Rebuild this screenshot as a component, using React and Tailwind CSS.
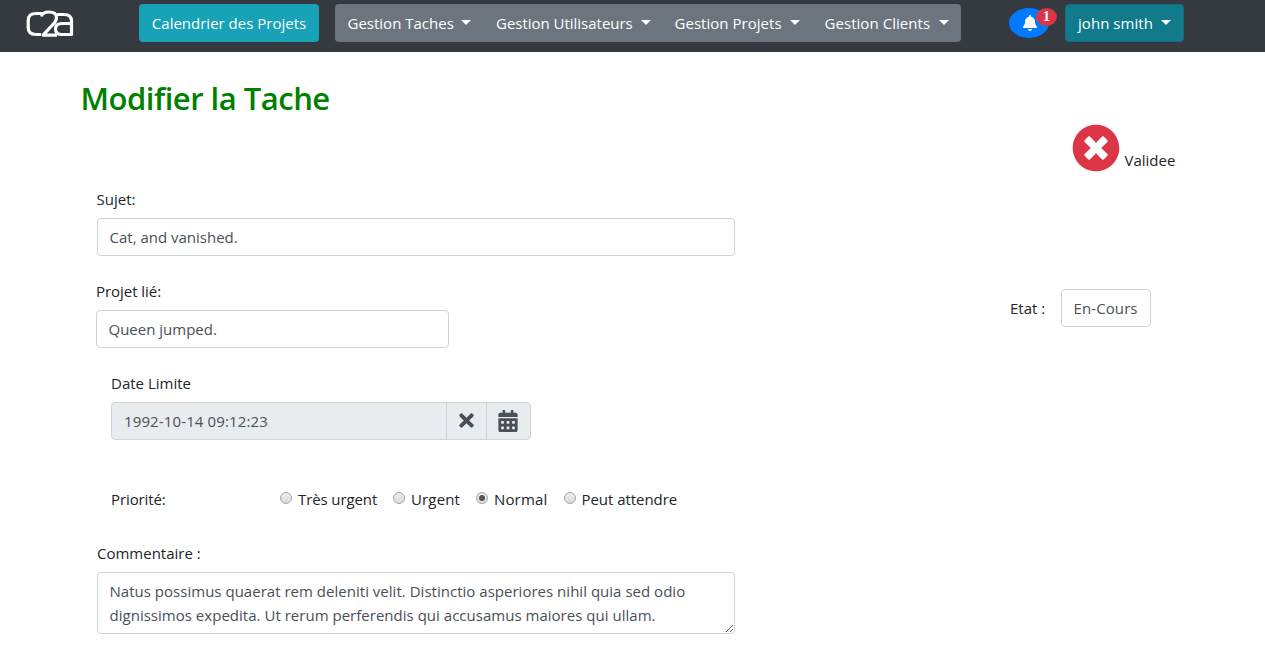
import { FaBell, FaTimesCircle, FaTimes, FaCalendarAlt } from "react-icons/fa";

const Caret = () => (
  <span className="ml-[8px] mt-[-2px] inline-block border-x-[5px] border-t-[5px] border-x-transparent border-t-white" />
);

const menus = [
  { label: "Gestion Taches", box: "w-[148.5px] rounded-l", text: "w-[105px]" },
  { label: "Gestion Utilisateurs", box: "w-[178.5px]", text: "w-[137px] tracking-[-0.02px]" },
  { label: "Gestion Projets", box: "w-[150px]", text: "w-[107.5px] tracking-[0.03px]" },
  { label: "Gestion Clients", box: "w-[149px] rounded-r", text: "w-[106px] tracking-[0.05px]" },
];

const priorities = [
  { label: "Très urgent", box: "w-[113px] tracking-[-0.1px]" },
  { label: "Urgent", box: "w-[83px] tracking-[0.15px]" },
  { label: "Normal", box: "w-[87.5px] tracking-[0.15px]", checked: true },
  { label: "Peut attendre", box: "w-[120px] tracking-[-0.05px]" },
];

const Radio = ({ checked }) => (
  <svg className="mt-[5px] mr-[6px] shrink-0" width="12" height="12" viewBox="0 0 12 12">
    <defs>
      <linearGradient id="radioFill" x1="0" y1="0" x2="0" y2="1">
        <stop offset="0" stopColor="#ededed" />
        <stop offset="1" stopColor="#dcdcdc" />
      </linearGradient>
    </defs>
    <circle cx="6" cy="6" r="5.5" fill="url(#radioFill)" stroke="#a6a6a6" />
    {checked && <circle cx="6" cy="6" r="3" fill="#555" />}
  </svg>
);

const field = "flex h-[38px] items-center rounded border border-[#ced4da] bg-white pl-[11.5px] text-[#495057]";

export default function App() {
  return (
    <div className="h-[649px] w-[1265px] overflow-hidden bg-white font-['Open_Sans','Noto_Sans',sans-serif] text-[15px] leading-6 text-[#212529]">
      <nav className="flex h-[52px] items-start bg-[#343a40] pt-1 text-white">
        <svg className="mt-[6px] ml-[26px] shrink-0" width="48" height="28" viewBox="0 0 48 28" fill="none" stroke="#fff" strokeWidth="3.2" strokeLinejoin="round">
          <path d="M17 3.500H10Q2.200 3.500 2.200 10.500V17.500Q2.200 24.500 10 24.500H15" />
          <path d="M15.500 6.500Q16.500 2 23 2Q30.500 2 30.500 7.500Q30.500 11 26.500 15L17 25.200H31" />
          <path d="M31 4.500H38Q45.500 4.500 45.500 11V24.500H36Q29.500 24.500 29.500 19Q29.500 13.500 36 13.500H45" />
        </svg>
        <button className="ml-[65px] h-[38px] w-[180px] rounded bg-[#17a2b8] whitespace-nowrap">Calendrier des Projets</button>
        <div className="ml-4 flex">
          {menus.map((m) => (
            <button key={m.label} className={`flex h-[38px] items-center bg-[#6c757d] pl-[12.5px] text-left whitespace-nowrap ${m.box}`}>
              <span className={m.text}>{m.label}</span>
              <Caret />
            </button>
          ))}
        </div>
        <div className="relative mt-1 ml-[48px] flex h-[30px] w-10 items-center justify-center rounded-[50%] bg-[#007bff]">
          <FaBell size={16} className="ml-px" />
          <span className="absolute top-0 left-[27px] flex h-[18px] w-[21px] items-center justify-center rounded-[50%] bg-[#dc3545] pb-px font-['Liberation_Serif',serif] text-[14px] font-bold">1</span>
        </div>
        <button className="ml-4 flex h-[38px] w-[119px] items-center rounded border border-[#10707f] bg-[#117a8b] pl-3 whitespace-nowrap">
          <span className="w-[75px] text-left tracking-[0.05px]">john smith</span>
          <Caret />
        </button>
      </nav>
      <h1 className="mt-[27px] ml-[80.5px] h-[38px] text-[31px] leading-[38px] font-semibold tracking-[-0.5px] whitespace-nowrap text-[#008000]">Modifier la Tache</h1>
      <div className="flex h-[70px] pt-[7px] pl-[1072px]">
        <FaTimesCircle size={48} className="shrink-0 text-[#dc3545]" />
        <span className="mt-6 ml-[4.500px]">Validee</span>
      </div>
      <div className="flex">
        <div className="w-[914px] shrink-0 pl-[97px]">
          <div className="mb-[7px] -ml-[0.5px]">Sujet:</div>
          <div className={`w-[638px] ${field}`}>Cat, and vanished.</div>
          <div className="mt-[23px] -ml-px mb-[7px] tracking-[-0.05px]">Projet lié:</div>
          <div className={`-ml-px w-[353px] ${field}`}>Queen jumped.</div>
          <div className="mt-[23px] ml-[14px] mb-[7px]">Date Limite</div>
          <div className="ml-[14px] flex h-[38px] w-[420px] rounded border border-[#ced4da] bg-[#e9ecef] text-[#495057]">
            <span className="flex w-[334px] items-center pl-3 tracking-[0.13px]">1992-10-14 09:12:23</span>
            <span className="flex w-10 items-center justify-center border-l border-[#ced4da]"><FaTimes size={21} className="mb-[2px]" /></span>
            <span className="flex flex-1 items-center justify-center border-l border-[#ced4da] pr-px"><FaCalendarAlt size={22} /></span>
          </div>
          <div className="mt-[47px] ml-[14px] flex h-6 whitespace-nowrap">
            <span className="w-[169px] tracking-[-0.1px]">Priorité:</span>
            {priorities.map((p) => (
              <label key={p.label} className={`flex ${p.box}`}>
                <Radio checked={p.checked} />
                {p.label}
              </label>
            ))}
          </div>
          <div className="mt-[30px] mb-[7px]">Commentaire :</div>
          <textarea
            className="block h-[62px] w-[638px] resize overflow-hidden rounded border border-[#ced4da] pr-3 pl-[11.5px] py-[6px] tracking-[0.02px] whitespace-pre text-[#495057]"
            defaultValue={"Natus possimus quaerat rem deleniti velit. Distinctio asperiores nihil quia sed odio\ndignissimos expedita. Ut rerum perferendis qui accusamus maiores qui ullam."}
          />
        </div>
        <div className="mt-[102px] ml-[96px] flex h-[38px] items-center">
          <span className="w-[51px]">Etat :</span>
          <div className={`w-[90px] tracking-[0.1px] whitespace-nowrap ${field}`}>En-Cours</div>
        </div>
      </div>
    </div>
  );
}
